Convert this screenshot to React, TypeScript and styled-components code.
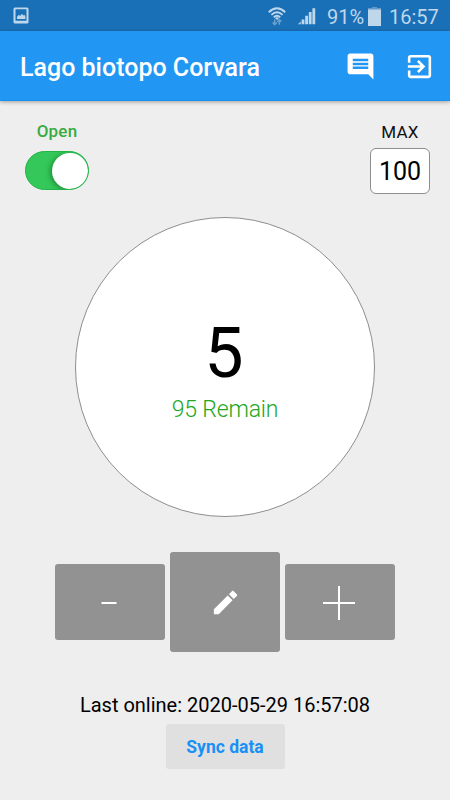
import React, { useState } from 'react';
import styled, { createGlobalStyle } from 'styled-components';

const GlobalStyle = createGlobalStyle`
  * { box-sizing: border-box; }
  body { margin: 0; background: #eeeeee; font-family: Roboto, sans-serif; color: #000; }
  button { font: inherit; border: 0; padding: 0; }
  svg { display: block; flex: none; }
`;

const Screen = styled.div`
  width: 450px;
  height: 800px;
  display: flex;
  flex-direction: column;
  background: #eeeeee;
  overflow: hidden;
`;

const StatusBar = styled.div`
  height: 31px;
  flex: none;
  display: flex;
  align-items: center;
  justify-content: space-between;
  padding: 1px 12px 0 13px;
  background: #1a70b7;
  color: #bfd7eb;
`;

const StatusIcons = styled.div`
  display: flex;
  align-items: center;
`;

const Indicator = styled.span<{ $gap: number }>`
  margin-right: ${(p) => p.$gap}px;
`;

const StatusText = styled.span<{ $width: number }>`
  width: ${(p) => p.$width}px;
  padding-top: 2px;
  font-size: 20px;
  line-height: 24px;
  white-space: nowrap;
`;

const AppBar = styled.header`
  height: 70px;
  flex: none;
  display: flex;
  align-items: center;
  padding: 0 15px 0 20px;
  background: #2296f3;
  border-bottom: 1px solid #1a8ff0;
  box-shadow: 0 1px 4px rgba(0, 0, 0, 0.34);
  color: #fff;
`;

const Title = styled.h1`
  margin: 4px auto 0 0;
  font-size: 25px;
  line-height: 30px;
  font-weight: 500;
  white-space: nowrap;
`;

const IconButton = styled.button`
  width: 31px;
  height: 31px;
  margin: 1px 0 0 28px;
  background: none;
  color: inherit;
`;

const Controls = styled.div`
  height: 116px;
  flex: none;
  display: flex;
  justify-content: space-between;
  padding: 20px 20px 0 25px;
`;

const Field = styled.div`
  display: flex;
  flex-direction: column;
  align-items: center;
`;

const FieldLabel = styled.span<{ $color: string; $weight: number; $lineHeight: number }>`
  height: 24px;
  line-height: ${(p) => p.$lineHeight}px;
  font-size: 17px;
  font-weight: ${(p) => p.$weight};
  color: ${(p) => p.$color};
  letter-spacing: 0.2px;
`;

const Toggle = styled.button`
  width: 64px;
  height: 39px;
  margin-top: 6px;
  padding: 0;
  display: flex;
  justify-content: flex-end;
  align-items: center;
  border-radius: 20px;
  background: #34c759;
  border: 1px solid #20b446;
  overflow: hidden;
`;

const Knob = styled.span`
  width: 36px;
  height: 36px;
  border-radius: 50%;
  background: #fff;
  box-shadow: -2px 1px 5px rgba(0, 60, 10, 0.4);
`;

const MaxBox = styled.div`
  width: 60px;
  height: 46px;
  margin-top: 3px;
  border: 1px solid #8e8e8e;
  border-radius: 6px;
  background: #fff;
  font-size: 25px;
  line-height: 46px;
  text-align: center;
`;

const Counter = styled.div`
  width: 300px;
  height: 300px;
  flex: none;
  align-self: center;
  display: flex;
  flex-direction: column;
  align-items: center;
  border: 1px solid #8e8e8e;
  border-radius: 50%;
  background: #fff;
`;

const Count = styled.div`
  margin-top: 95px;
  padding-right: 2px;
  font-size: 70px;
  line-height: 80px;
`;

const Remain = styled.div`
  margin-top: 3px;
  font-size: 23px;
  line-height: 28px;
  font-weight: 300;
  letter-spacing: -0.2px;
  color: #22a722;
`;

const Actions = styled.div`
  height: 100px;
  margin-top: 35px;
  flex: none;
  display: flex;
  justify-content: center;
  align-items: center;
  gap: 5px;
`;

const ActionButton = styled.button<{ $tall?: boolean }>`
  width: 110px;
  height: ${(p) => (p.$tall ? 100 : 76)}px;
  display: flex;
  align-items: center;
  justify-content: center;
  padding: ${(p) => (p.$tall ? '1px 0 0' : '2px 2px 0 0')};
  border-radius: 3px;
  background: #929292;
  color: #fff;
`;

const Footer = styled.footer`
  display: flex;
  flex-direction: column;
  align-items: center;
  margin-top: 40px;
`;

const LastOnline = styled.div`
  font-size: 20px;
  line-height: 26px;
  white-space: nowrap;
`;

const SyncButton = styled.button`
  width: 119px;
  height: 45px;
  margin-top: 6px;
  border-radius: 3px;
  background: #e0e0e0;
  color: #1890f5;
  font-size: 17.5px;
  font-weight: 700;
`;

const PictureIcon = () => (
  <svg width="17" height="18" viewBox="0 0 17 18">
    <path fill="#bfd7eb" fillRule="evenodd" d="M2 .5h12a1.5 1.5 0 0 1 1.5 1.5v13a1.5 1.5 0 0 1-1.5 1.5H2A1.5 1.5 0 0 1 .5 15V2A1.5 1.5 0 0 1 2 .5zM2.5 2.3v11.4h11V2.3z" />
    <path fill="#bfd7eb" d="M4 12V9.8l2-2 1.2 1.2L9 6.8l1.3 1.7 1.1-.7 1 1.7V12z" />
  </svg>
);

const WifiIcon = () => (
  <svg width="18" height="19" viewBox="0 0 18 19" fill="none" stroke="#bfd7eb">
    <path strokeWidth="1.9" d="M.8 5.2Q9-2.6 17.2 5.2M3.4 7.9Q9 2.5 14.6 7.9M5.8 10.4Q9 7.2 12.2 10.4" />
    <path fill="#bfd7eb" stroke="none" d="M7 11.1Q9 9.5 11 11.1L9 13z" />
    <path stroke="#6ca1cd" strokeWidth="1.5" d="M6.7 12.5v5M4.6 15.4l2.1 2.2 2.1-2.2M11.3 17.8v-5M9.2 14.8l2.1-2.2 2.1 2.2" />
  </svg>
);

const SignalIcon = () => (
  <svg width="18" height="18" viewBox="0 0 18 18" fill="#bfd7eb">
    <path d="M0 17.2l2.7-2.8v2.8zM3.6 12.5h2.8v4.7H3.6zM7.2 8.8H10v8.4H7.2zM10.8 5h2.8v12.2h-2.8zM14.4 1.2h2.8v16h-2.8z" />
  </svg>
);

const BatteryIcon = () => (
  <svg width="13" height="19" viewBox="0 0 13 19">
    <path fill="#6199c8" d="M4 0h5v1h4v2H0V1h4z" />
    <path fill="#bfd7eb" d="M0 2.5h13V19H0z" />
  </svg>
);

const CommentIcon = () => (
  <svg width="31" height="31" viewBox="0 0 24 24" fill="currentColor">
    <path d="M21.99 4c0-1.1-.89-2-1.99-2H4c-1.1 0-2 .9-2 2v12c0 1.1.9 2 2 2h14l4 4-.01-18zM18 14H6v-2h12v2zm0-3H6V9h12v2zm0-3H6V6h12v2z" />
  </svg>
);

const ExitIcon = () => (
  <svg width="31" height="31" viewBox="0 0 24 24" fill="currentColor">
    <path d="M10.09 15.59L11.5 17l5-5-5-5-1.41 1.41L12.67 11H3v2h9.67l-2.58 2.59zM19 3H5c-1.11 0-2 .9-2 2v4h2V5h14v14H5v-4H3v4c0 1.1.89 2 2 2h14c1.1 0 2-.9 2-2V5c0-1.1-.9-2-2-2z" />
  </svg>
);

const MinusIcon = () => (
  <svg width="16" height="4" viewBox="0 0 16 4">
    <path fill="#fff" d="M.5 1h15v2H.5z" />
  </svg>
);

const PencilIcon = () => (
  <svg width="31" height="31" viewBox="0 0 24 24" fill="currentColor">
    <path d="M3 17.25V21h3.75L17.45 10.3l-3.75-3.75L3 17.25zM20.71 7.04c.39-.39.39-1.02 0-1.41l-2.34-2.34c-.39-.39-1.02-.39-1.41 0l-2.3 2.3 3.75 3.75 2.3-2.3z" />
  </svg>
);

const PlusIcon = () => (
  <svg width="32" height="34" viewBox="0 0 32 34">
    <path fill="#fff" d="M0 16h32v2H0zM15 0h2v34h-2z" />
  </svg>
);

const MAX = 100;

export default function App() {
  const [count, setCount] = useState(5);
  return (
    <>
      <GlobalStyle />
      <Screen>
        <StatusBar>
          <PictureIcon />
          <StatusIcons>
            <Indicator $gap={12}><WifiIcon /></Indicator>
            <Indicator $gap={11}><SignalIcon /></Indicator>
            <StatusText $width={41}>91%</StatusText>
            <Indicator $gap={8}><BatteryIcon /></Indicator>
            <StatusText $width={49}>16:57</StatusText>
          </StatusIcons>
        </StatusBar>
        <AppBar>
          <Title>Lago biotopo Corvara</Title>
          <IconButton aria-label="Comments"><CommentIcon /></IconButton>
          <IconButton aria-label="Exit"><ExitIcon /></IconButton>
        </AppBar>
        <Controls>
          <Field>
            <FieldLabel $color="#3aab40" $weight={500} $lineHeight={21}>Open</FieldLabel>
            <Toggle role="switch" aria-checked="true"><Knob /></Toggle>
          </Field>
          <Field>
            <FieldLabel $color="#111" $weight={400} $lineHeight={23}>MAX</FieldLabel>
            <MaxBox>{MAX}</MaxBox>
          </Field>
        </Controls>
        <Counter>
          <Count>{count}</Count>
          <Remain>{MAX - count} Remain</Remain>
        </Counter>
        <Actions>
          <ActionButton aria-label="Decrease" onClick={() => setCount(count - 1)}><MinusIcon /></ActionButton>
          <ActionButton $tall aria-label="Edit"><PencilIcon /></ActionButton>
          <ActionButton aria-label="Increase" onClick={() => setCount(count + 1)}><PlusIcon /></ActionButton>
        </Actions>
        <Footer>
          <LastOnline>Last online: 2020-05-29 16:57:08</LastOnline>
          <SyncButton>Sync data</SyncButton>
        </Footer>
      </Screen>
    </>
  );
}
